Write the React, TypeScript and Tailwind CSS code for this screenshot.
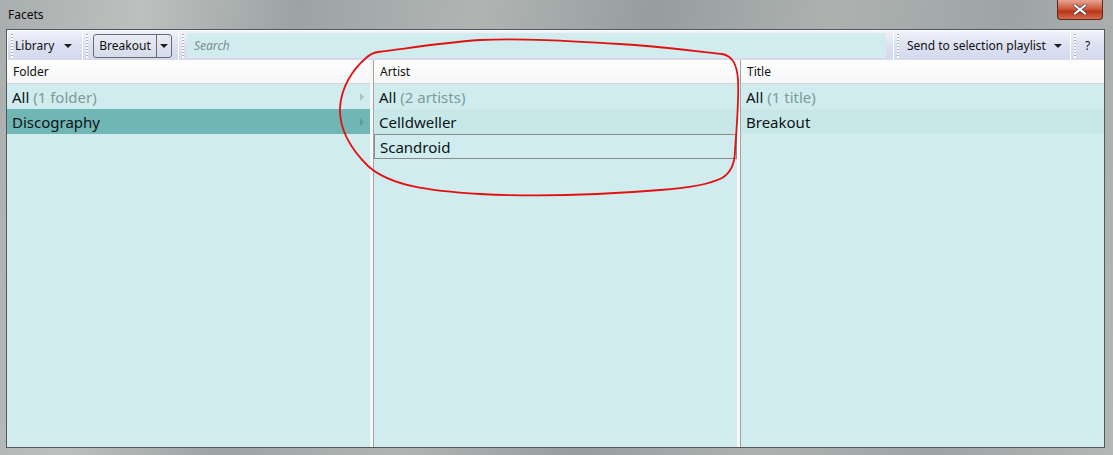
import React from "react";

const FONT = { fontFamily: '"Segoe UI", "Noto Sans", "Open Sans", sans-serif' };

function Gripper() {
  return (
    <div className="flex h-full w-[8px] shrink-0 items-center justify-center border-l border-white">
      <div className="h-[24px] w-[2px] bg-[repeating-linear-gradient(to_bottom,#a8abb8_0px,#a8abb8_1px,#ffffff_1px,#ffffff_3px)]" />
    </div>
  );
}

function Arrow({ className = "" }: { className?: string }) {
  return (
    <svg width="8" height="4" viewBox="0 0 8 4" className={className}>
      <path d="M0 0 L8 0 L4 4 Z" fill="#1e1e1e" />
    </svg>
  );
}

function RowArrow({ color = "#a9c2c2" }: { color?: string }) {
  return (
    <svg width="4" height="8" viewBox="0 0 4 8">
      <path d="M0 0 L4 4 L0 8 Z" fill={color} />
    </svg>
  );
}

function Row({
  label,
  count,
  selected,
  alt,
  focused,
  arrow,
}: {
  label: string;
  count?: string;
  selected?: boolean;
  alt?: boolean;
  focused?: boolean;
  arrow?: boolean;
}) {
  const bg = selected ? "bg-[#70b6b4]" : alt ? "bg-[#c8e7e9]" : "bg-[#d0ecee]";
  return (
    <div
      className={`flex h-[25px] items-center justify-between pl-[5px] pr-[6px] pt-[1px] text-[15px] text-[#0a1414] ${bg} ${
        focused ? "border border-[#8a8a8a] pl-[4px]" : ""
      }`}
    >
      <span className="leading-none">
        {label}
        {count && <span className="text-[#7d9a9c]"> {count}</span>}
      </span>
      {arrow && <RowArrow color={selected ? "#5f9a98" : "#a9c2c2"} />}
    </div>
  );
}

function Column({ title, children }: { title: string; children: React.ReactNode }) {
  return (
    <div className="flex min-w-0 flex-1 flex-col">
      <div className="flex h-[24px] items-center border-b border-[#d6d6d6] bg-[linear-gradient(to_bottom,#ffffff,#f4f5f6)] pl-[6px] text-[12px] text-[#101010]">
        {title}
      </div>
      <div className="flex-1 bg-[#d0ecee]">{children}</div>
    </div>
  );
}

function Divider() {
  return <div className="w-[4px] shrink-0 border-r border-[#a3a3a3] bg-[#f6f8f8]" />;
}

export default function App() {
  return (
    <div
      className="relative h-[455px] w-[1113px] overflow-hidden bg-[linear-gradient(100deg,#a9aeae_0%,#bcc0bf_12%,#9da3a3_25%,#b0b5b4_40%,#979d9d_55%,#adb2b1_70%,#9ea4a4_85%,#b3b7b6_100%)]"
      style={FONT}
    >
      {/* title bar */}
      <div className="flex h-[29px] items-start justify-between">
        <span className="pl-[8px] pt-[6px] text-[12px] text-[#0a0a0a]">Facets</span>
        <div className="mr-[10px] flex h-[20px] w-[46px] items-center justify-center rounded-b-[4px] border border-t-0 border-[#5a2a22] bg-[linear-gradient(to_bottom,#e7a593,#cf5a3d_45%,#b9361c_60%,#d56a4a)]">
          <svg width="14" height="11" viewBox="0 0 14 11">
            <path d="M2 1.5 L12 9.5 M12 1.5 L2 9.5" stroke="#4a4a52" strokeWidth="3.6" strokeLinecap="round" />
            <path d="M2 1.5 L12 9.5 M12 1.5 L2 9.5" stroke="#ffffff" strokeWidth="2.2" strokeLinecap="round" />
          </svg>
        </div>
      </div>

      {/* window body */}
      <div className="ml-[6px] mr-[8px] flex h-[419px] flex-col border border-[#50585a] bg-white">
        {/* toolbar */}
        <div className="flex h-[30px] items-center border-t border-white bg-[linear-gradient(to_bottom,#f1f3fb,#dde2f2_45%,#d3d9ee)] text-[12px] text-[#111]">
          <Gripper />
          <div className="flex w-[67px] items-center justify-between pr-[10px]">
            <span>Library</span>
            <Arrow />
          </div>
          <Gripper />
          <div className="ml-[3px] mr-[6px] flex h-[24px] w-[79px] items-stretch rounded-[3px] border border-[#6b6b6b] bg-[linear-gradient(to_bottom,#e9ecf5,#d6dbea)]">
            <span className="flex flex-1 items-center justify-center border-r border-[#6b6b6b] pt-[1px]">Breakout</span>
            <span className="flex w-[14px] items-center justify-center">
              <Arrow />
            </span>
          </div>
          <Gripper />
          <div className="ml-[1px] flex h-[25px] flex-1 items-center border border-[#dce8ec] bg-[#d0ecee] pl-[6px] text-[12px] italic text-[#7b8c8e]">
            Search
          </div>
          <div className="w-[7px]" />
          <Gripper />
          <div className="flex w-[169px] items-center justify-between pl-[6px] pr-[8px]">
            <span>Send to selection playlist</span>
            <Arrow />
          </div>
          <Gripper />
          <div className="flex w-[26px] items-center pl-[7px]">?</div>
        </div>

        {/* columns */}
        <div className="flex flex-1">
          <Column title="Folder">
            <Row label="All" count="(1 folder)" arrow />
            <Row label="Discography" selected arrow />
          </Column>
          <Divider />
          <Column title="Artist">
            <Row label="All" count="(2 artists)" />
            <Row label="Celldweller" alt />
            <Row label="Scandroid" focused />
          </Column>
          <Divider />
          <Column title="Title">
            <Row label="All" count="(1 title)" />
            <Row label="Breakout" alt />
          </Column>
        </div>
      </div>

      {/* hand-drawn red annotation */}
      <svg className="pointer-events-none absolute left-0 top-0" width="1113" height="455">
        <path
          d="M378 52 C372 53 368 56 366 58 C352 70 341 88 340 108 C339 130 352 150 368 166 C390 186 430 191 480 194 C540 197 600 195 660 190 C690 188 712 183 722 178 C732 172 735 162 735 150 C737 125 739 100 738 80 C737 65 733 56 722 54 C700 52 660 46 620 44 C570 41 520 38 480 40 C440 43 410 48 378 52"
          fill="none"
          stroke="#e41010"
          strokeWidth="1.8"
        />
      </svg>
    </div>
  );
}
